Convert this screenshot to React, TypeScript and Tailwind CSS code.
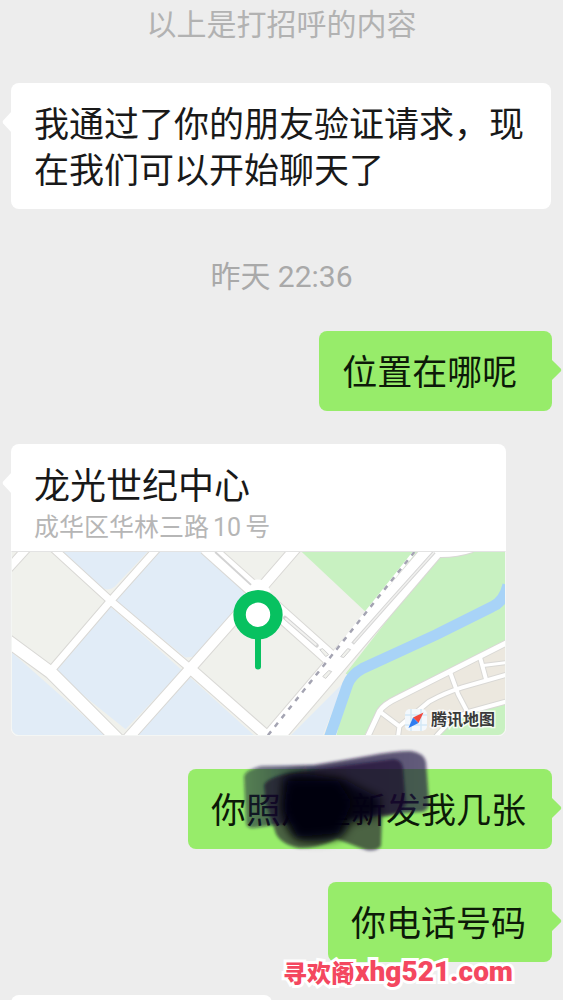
import type { ReactNode } from "react";

interface BubbleProps {
  side: "left" | "right";
  children?: ReactNode;
}

function Tail({ side }: { side: "left" | "right" }) {
  return side === "left" ? (
    <svg className="absolute top-[28px] -left-[9px] h-[22px] w-[10px]" viewBox="0 0 10 22">
      <path d="M10 0 L1.2 9.4 Q0 11 1.2 12.6 L10 22Z" fill="#fff" />
    </svg>
  ) : (
    <svg className="absolute top-[28px] -right-[10px] h-[22px] w-[11px]" viewBox="0 0 11 22">
      <path d="M0 0 L9.6 9.4 Q11 11 9.6 12.6 L0 22Z" fill="#97ec6a" />
    </svg>
  );
}

function Bubble({ side, children }: BubbleProps) {
  const tone = side === "left" ? "self-start bg-white text-[#191919]" : "self-end bg-[#97ec6a] text-[#0c1a08]";
  return (
    <div className={`relative max-w-[540px] rounded-lg pt-5 pr-[26px] pb-[14px] pl-[23px] text-[35px] leading-[46px] ${tone}`}>
      <Tail side={side} />
      {children}
    </div>
  );
}

function Smudge() {
  return (
    <svg className="absolute -top-[22px] left-[50px] h-[110px] w-[200px]" viewBox="0 0 200 110" aria-hidden="true">
      <defs>
        <filter id="soft" x="-10%" y="-10%" width="120%" height="120%">
          <feGaussianBlur stdDeviation="1.7" />
        </filter>
        <filter id="softer" x="-20%" y="-20%" width="140%" height="140%">
          <feGaussianBlur stdDeviation="5" />
        </filter>
        <linearGradient id="wash" x1="0" y1="0" x2="1" y2="0">
          <stop offset="0" stopColor="#16103a" stopOpacity="0.5" />
          <stop offset="0.4" stopColor="#16103a" stopOpacity="0.75" />
          <stop offset="1" stopColor="#1c0f42" stopOpacity="0.66" />
        </linearGradient>
      </defs>
      <path
        d="M6 29 Q8 23 23 19 Q50 19 76 18 Q102 14 130 9 Q156 4 173 4 Q186 6 188 15 L191 56 Q190 66 180 65 L143 68 L36 78 L15 81 Q8 81 8 75Z"
        fill="url(#wash)"
        filter="url(#soft)"
      />
      <path
        d="M26 38 Q30 30 53 26 L110 18 L156 12 Q164 13 165 21 L168 58 Q160 68 144 70 L143 99 Q138 105 128 103 L99 92 Q80 101 62 101 Q44 98 38 87 L28 56Z"
        fill="#0e0a2a"
        fillOpacity="0.58"
        filter="url(#soft)"
      />
      <path
        d="M45 32 Q54 24 76 28 L108 33 Q126 44 142 50 L142 68 Q125 73 112 76 Q108 88 100 91 Q78 98 58 92 Q46 82 44 60Z"
        fill="#03020e"
        fillOpacity="0.85"
        filter="url(#softer)"
      />
      <path d="M50 34 L100 34 L114 56 L100 86 L60 90 L46 62Z" fill="#03010c" filter="url(#softer)" />
    </svg>
  );
}

function MapDrawing() {
  const streets = [
    { d: "M40 -5 L99 49 L179 117", w: 7 },
    { d: "M179 117 L262 190", w: 10 },
    { d: "M148 -6 L99 49 L39 119", w: 7 },
    { d: "M-6 88 L39 121 L108 190", w: 12 },
    { d: "M112 192 L179 117 L247 40 L286 -5", w: 10 },
    { d: "M16 -5 L-4 17", w: 8 },
    { d: "M195 -5 L319 106", w: 15 },
    { d: "M258 191 L427 -7", w: 20 },
    { d: "M425 2 Q445 3 462 -3", w: 6 },
  ];
  const lanes = [
    { d: "M355 190 L369 160 Q373 153 388 146 L497 91", w: 5 },
    { d: "M369 160 L389 175 L387 190", w: 4 },
    { d: "M389 175 L419 150 Q436 141 452 136 L497 123", w: 4 },
    { d: "M440 121 L448 143 L458 162", w: 4 },
    { d: "M470 106 L476 128", w: 4 },
    { d: "M473 114 L497 111", w: 3 },
    { d: "M422 190 Q440 166 460 160 L497 150", w: 4 },
  ];
  return (
    <svg className="block w-full" viewBox="0 0 495 184" role="img" aria-label="地图">
      <rect width="495" height="184" fill="#f0f1ec" />
      <g fill="#e1ecf7">
        <path d="M50 0 L92 37 Q98 39 103 35 L136 0Z" />
        <path d="M147 0 L104 49 L174 106 L186 105 L231 50 L234 38 L192 0Z" />
        <path d="M99 55 L171 119 L114 178 L43 121Z" />
        <path d="M0 101 L94 184 L0 184Z" />
        <path d="M179 126 L243 184 L125 184Z" />
        <path d="M334 130 L312 184 L280 184Z" />
      </g>
      <g fill="#c8f1c1">
        <path d="M291 0 L356 61 L408 0Z" />
        <path d="M430 0 L495 0 L495 90 L390 143 Q374 149 369 158 L354 184 L326 184 L338 124 L335 122Z" />
      </g>
      <path d="M388 146 L495 92 L495 184 L358 184 L369 160Z" fill="#ece8df" />
      <path d="M425 184 Q440 168 460 162 L495 153 L495 184Z" fill="#c8f1c1" />
      <path d="M498 33 Q494 50 482 55 L426 83 L352 117 Q341 123 337 133 L318 188" fill="none" stroke="#a8d3f7" strokeWidth="11" />
      <g fill="none" stroke="#d9d8d5" strokeLinejoin="round">
        {lanes.map((s) => <path key={s.d} d={s.d} strokeWidth={s.w + 2} />)}
        {streets.map((s) => <path key={s.d} d={s.d} strokeWidth={s.w + 2} />)}
      </g>
      <g fill="none" stroke="#fff" strokeLinejoin="round">
        {lanes.map((s) => <path key={s.d} d={s.d} strokeWidth={s.w} />)}
        {streets.map((s) => <path key={s.d} d={s.d} strokeWidth={s.w} />)}
      </g>
      <path d="M240 29 Q246 26 254 29 L260 40 L236 42Z" fill="#fff" />
      <path d="M204 0 L240 33" stroke="#d3d3d3" strokeWidth="2" />
      <path d="M274 66 L306 94" stroke="#d3d3d3" strokeWidth="4" strokeLinecap="round" />
      <path d="M275 67 L305 93" stroke="#f2f2f0" strokeWidth="2" strokeLinecap="round" />
      <path d="M342 92 L380 49 L424 0" fill="none" stroke="#d6d6d6" strokeWidth="3.5" />
      <path d="M343 91 L380 49 L424 0" fill="none" stroke="#f0f0ee" strokeWidth="1.5" />
      <g fill="#f0f1ec" stroke="#d0d0d0" strokeWidth="1">
        <path d="M330 105 L337 97 L340 98 L333 106Z" />
        <path d="M312 125 L318 119 L321 120 L315 127Z" />
        <path d="M309 98 L312 97 L318 103 L315 105Z" />
      </g>
      <path d="M257 184 L404 0" stroke="#fff" strokeWidth="3" />
      <path d="M257 184 L404 0" stroke="#a4a4b2" strokeWidth="2.5" strokeDasharray="5 6" />
      <path d="M247 84 L247 115" stroke="#07c160" strokeWidth="6" strokeLinecap="round" />
      <circle cx="247" cy="63" r="18.5" fill="#fff" stroke="#07c160" strokeWidth="12.5" />
    </svg>
  );
}

function LocationCard() {
  return (
    <a href="#location" className="relative block w-[495px] max-w-full self-start rounded-lg bg-white">
      <Tail side="left" />
      <div className="pt-5 pr-6 pb-2 pl-[23px]">
        <h2 className="text-[36px] leading-[46px] text-[#191919]">龙光世纪中心</h2>
        <p className="pt-[2px] text-[25px] leading-[32px] text-[#b6b6b6]">
          成华区华林三路<span className="mx-1">10</span>号
        </p>
      </div>
      <div className="relative -mt-px overflow-hidden rounded-b-lg border border-[#f4f6f4] border-t-[#e3e3e3]">
        <MapDrawing />
        <div className="absolute right-[10px] bottom-1 flex items-center gap-1">
          <svg className="h-[22px] w-[22px]" viewBox="0 0 22 22">
            <rect width="22" height="22" rx="5" fill="#f3f8fc" />
            <path d="M6 0V22M16 0V22M0 6H22M0 16H22" stroke="#d3e8f6" strokeWidth="1.5" />
            <path d="M18.5 3.5 L8 8.5 L13.5 14Z" fill="#f04a3e" />
            <path d="M3.5 19 L8 8.5 L13.5 14Z" fill="#2f7df0" />
          </svg>
          <span className="text-[16px] leading-[22px] font-bold text-[#3a3a3a] [paint-order:stroke_fill] [-webkit-text-stroke:3px_#ffffffcc]">
            腾讯地图
          </span>
        </div>
      </div>
    </a>
  );
}

export default function App() {
  return (
    <main
      lang="zh-CN"
      className="relative flex h-screen flex-col gap-[33px] overflow-hidden bg-[#ededed] px-[11px] pt-1 font-['Roboto','Noto_Sans_CJK_SC',sans-serif]"
    >
      <p className="pb-1 text-center text-[30px] leading-[42px] text-[#b2b2b2]">以上是打招呼的内容</p>
      <Bubble side="left">我通过了你的朋友验证请求，现在我们可以开始聊天了</Bubble>
      <time className="block pt-[14px] text-center text-[30px] leading-[42px] text-[#a9a9a9]">昨天 22:36</time>
      <Bubble side="right">位置在哪呢&nbsp;</Bubble>
      <LocationCard />
      <Bubble side="right">
        你照片重新发我几张
        <Smudge />
      </Bubble>
      <Bubble side="right">你电话号码</Bubble>
      <div className="h-20 w-[261px] shrink-0 rounded-lg bg-white" />

      <div className="absolute right-[50px] bottom-[12px] flex items-center text-[#f4475f] [paint-order:stroke_fill] [-webkit-text-stroke:6px_#fff]">
        <span className="font-['Noto_Sans_CJK_SC',sans-serif] text-[24px] leading-[32px] font-black">寻欢阁</span>
        <span className="text-[28px] leading-[32px] font-black">xhg521.com</span>
      </div>
    </main>
  );
}
